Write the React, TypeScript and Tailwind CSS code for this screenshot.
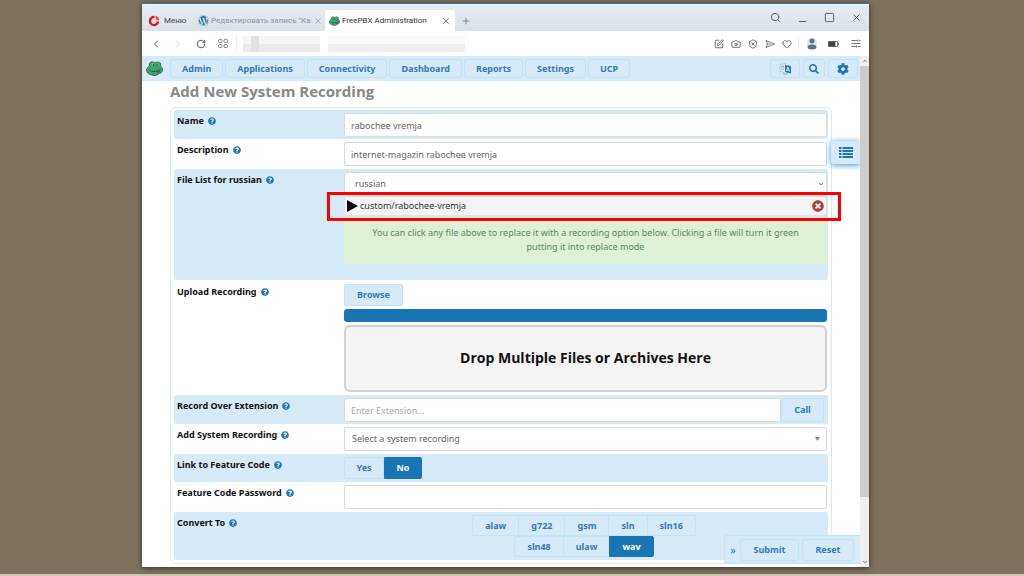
import React, { useState } from "react";
import { FaCog, FaQuestionCircle, FaSearch, FaTimesCircle, FaWordpress } from "react-icons/fa";
import {
  Camera,
  ChevronDown,
  ChevronLeft,
  ChevronRight,
  ChevronUp,
  Heart,
  Minus,
  Plus,
  RotateCw,
  Search,
  ShieldX,
  Square,
  SquarePen,
  X,
} from "lucide-react";

const navItems = ["Admin", "Applications", "Connectivity", "Dashboard", "Reports", "Settings", "UCP"];
const formats = [
  ["alaw", "g722", "gsm", "sln", "sln16"],
  ["sln48", "ulaw", "wav"],
];

const buttonBase =
  "border border-[#c3e3f6] bg-[#d7eaf8] font-bold text-[#337ab7] flex items-center justify-center";
const fieldBase =
  "block h-6 w-full min-w-0 rounded-[2px] border border-[#d9dcde] bg-white text-[#666] outline-none";

function Frog({ className }: { className: string }) {
  return (
    <svg viewBox="0 0 34 30" className={className} aria-hidden="true">
      <path
        d="M7 10C5 4 9 1 14 2c2 0 3 1 4 2 2-2 6-3 9-1 3 1 3 5 2 7 3 2 4 5 4 8 0 5-5 7-8 8-3 3-9 4-13 2C6 27 1 24 1 18c0-4 3-6 6-8Z"
        fill="#3fa66b"
        stroke="#205b50"
        strokeWidth="1.5"
      />
      <ellipse cx="14" cy="7" rx="2.6" ry="3.2" fill="#71c795" />
      <ellipse cx="23" cy="7" rx="2.6" ry="3.2" fill="#71c795" />
      <ellipse cx="15" cy="8" rx="1.2" ry="2" fill="#17363c" />
      <ellipse cx="22" cy="8" rx="1.2" ry="2" fill="#17363c" />
      <path d="M5 17c5 5 16 6 25-1" fill="none" stroke="#1c4c48" strokeWidth="1.6" />
      <path d="M22 20c1 5 5 5 5-1Z" fill="#c84a5b" stroke="#1c4c48" />
    </svg>
  );
}

function OperaMark() {
  return (
    <svg viewBox="0 0 24 24" className="size-3" aria-hidden="true">
      <path d="M13 1.500A10.500 10.500 0 1 0 22.500 13H17.500a5.500 6 0 1 1-4.500-7Z" fill="#e0161f" />
      <path d="M15 1.500a10 10 0 0 1 7.500 8.500l-5 .8A6 6 0 0 0 15 7Z" fill="#f0444c" />
    </svg>
  );
}

function TranslateMark() {
  return (
    <svg viewBox="0 0 26 24" className="h-3 w-[13px]" aria-hidden="true">
      <path d="M2 3 13 1v18L2 17Z" fill="#e9f3fa" stroke="#7dadcf" />
      <path d="M4 7h7M7.500 5v2m2.500 0c-1 4-3 6-6 7m1-5c1 3 3 4 5 5" fill="none" stroke="#64819b" />
      <path d="m12 4 12 2v15l-12-3Z" fill="#1f76b4" />
      <path d="m15 16 3-8 3 9m-5-3 4 .5" fill="none" stroke="#fff" strokeWidth="1.6" />
      <path d="M8 21c3 2 7 2 9 0" fill="none" stroke="#5e8dad" strokeWidth="1.5" />
    </svg>
  );
}

function ListMark() {
  return (
    <svg viewBox="0 0 28 22" className="h-[11px] w-3.5" aria-hidden="true" fill="#1f76b4">
      <path d="M0 0h5v4H0zM7 0h21v4H7zM0 6h5v4H0zM7 6h21v4H7zM0 12h5v4H0zM7 12h21v4H7zM0 18h5v4H0zM7 18h21v4H7z" />
    </svg>
  );
}

function Row({
  label,
  htmlFor,
  tinted,
  className = "",
  children,
}: {
  label: string;
  htmlFor?: string;
  tinted?: boolean;
  className?: string;
  children: React.ReactNode;
}) {
  return (
    <div
      className={`grid grid-cols-[167px_minmax(0,1fr)] rounded-[2px] pr-px pl-[3px] ${
        tinted ? "bg-[#d7eaf8]" : "bg-white"
      } ${className}`}
    >
      <div className="flex h-[15px] items-center gap-1 font-bold text-[#111]">
        <label htmlFor={htmlFor}>{label}</label>
        <FaQuestionCircle className="size-2 text-[#1f76b4]" />
      </div>
      <div className="min-w-0">{children}</div>
    </div>
  );
}

function BrowserChrome() {
  return (
    <header className="font-[Roboto,'Noto_Sans',sans-serif] text-[8px]">
      <div className="flex h-7 items-end border-t border-[#3f77a3] bg-linear-to-b from-[#e6eef5] to-[#dae1e9]">
        <button className="flex h-5 w-[52px] items-center gap-1 pl-1.5 text-[#444]">
          <OperaMark />
          Меню
        </button>
        <div className="flex h-[21px] w-[131px] items-center gap-0.5 pr-2 pl-1 text-[#8b949d]">
          <FaWordpress className="size-[11px] shrink-0 text-[#2878a8]" />
          <span className="flex-1 whitespace-nowrap">Редактировать запись "Ка</span>
          <button aria-label="Close tab">
            <X className="size-2.5" strokeWidth={1.5} />
          </button>
        </div>
        <div className="flex h-[21px] w-[130px] items-center gap-0.5 rounded-t-[2px] bg-white pr-1 pl-1 text-[#333]">
          <Frog className="h-2.5 w-[11px] shrink-0" />
          <span className="flex-1 whitespace-nowrap">FreePBX Administration</span>
          <button aria-label="Close tab">
            <X className="size-2.5" strokeWidth={1.5} />
          </button>
        </div>
        <button aria-label="New tab" className="flex h-[21px] items-center pl-1.5 text-[#666]">
          <Plus className="size-2.5" strokeWidth={1.75} />
        </button>
        <div className="ml-auto flex h-full items-center gap-4 pr-[7px] text-[#555]">
          <button aria-label="Search tabs">
            <Search className="size-[11px]" strokeWidth={2} />
          </button>
          <button aria-label="Minimize" className="pt-2">
            <Minus className="size-[11px]" strokeWidth={2} />
          </button>
          <button aria-label="Maximize">
            <Square className="size-[11px]" strokeWidth={2} />
          </button>
          <button aria-label="Close">
            <X className="size-[11px]" strokeWidth={2} />
          </button>
        </div>
      </div>
      <div className="flex h-[25px] items-center bg-white px-2 text-[#555]">
        <button aria-label="Back">
          <ChevronLeft className="size-3" strokeWidth={2} />
        </button>
        <button aria-label="Forward" className="ml-2.5 text-[#ccc]">
          <ChevronRight className="size-3" strokeWidth={2} />
        </button>
        <button aria-label="Reload" className="ml-3">
          <RotateCw className="size-2.5" strokeWidth={2.25} />
        </button>
        <button aria-label="Speed dial" className="ml-3">
          <svg viewBox="0 0 20 18" className="h-[9px] w-2.5" fill="none" stroke="#666" strokeWidth="1.6" aria-hidden="true">
            <rect x="1" y="1" width="7" height="6" rx="2" />
            <rect x="12" y="1" width="7" height="6" rx="2" />
            <rect x="1" y="11" width="7" height="6" rx="2" />
            <rect x="12" y="11" width="7" height="6" rx="2" />
          </svg>
        </button>
        <div className="ml-2 h-4 border-l border-[#eee]" />
        <div className="mt-px ml-1.5 flex h-4 flex-1 gap-2">
          <div className="h-full w-[77px] bg-linear-to-b from-[#f5f5f5] from-50% to-[#eaeaea] to-50%">
            <div className="ml-2 h-full w-2 bg-[#e2e2e2]" />
          </div>
          <div className="h-full w-[137px] bg-linear-to-b from-[#fafafa] from-50% to-[#eff0ef] to-50%" />
        </div>
        <div className="flex items-center gap-[7px]">
          <SquarePen className="size-2.5" strokeWidth={2} />
          <Camera className="size-2.5" strokeWidth={2} />
          <ShieldX className="size-2.5" strokeWidth={2} />
          <svg
            viewBox="0 0 20 20"
            className="size-2.5"
            fill="none"
            stroke="currentColor"
            strokeWidth="1.6"
            strokeLinejoin="round"
            aria-hidden="true"
          >
            <path d="m2 3 17 7-17 7 3-7ZM5 10h6" />
          </svg>
          <Heart className="size-2.5" strokeWidth={2} />
        </div>
        <div className="ml-1.5 h-4 border-l border-[#eee]" />
        <svg viewBox="0 0 24 26" className="ml-[7px] h-[13px] w-3" aria-hidden="true">
          <circle cx="12" cy="12" r="11" fill="#dfe8f1" />
          <circle cx="12" cy="8" r="5" fill="#60728a" />
          <ellipse cx="12" cy="20" rx="9" ry="5" fill="#60728a" />
        </svg>
        <svg viewBox="0 0 22 12" className="ml-2.5 h-1.5 w-[11px]" aria-hidden="true">
          <path d="M1 1h18v10H1zM19 4h2v4h-2" fill="none" stroke="#555" strokeWidth="1.5" />
          <path d="M1 1h14v10H1z" fill="#444" />
        </svg>
        <svg
          viewBox="0 0 20 18"
          className="ml-3 h-[9px] w-2.5"
          fill="none"
          stroke="currentColor"
          strokeWidth="1.6"
          aria-hidden="true"
        >
          <path d="M1 3h12m3 0h3M1 9h3m3 0h12M1 15h9m3 0h6M14 1v4M6 7v4M11 13v4" />
        </svg>
      </div>
    </header>
  );
}

export default function App() {
  const [linked, setLinked] = useState("No");
  const [selected, setSelected] = useState<string[]>(["wav"]);
  const toggle = (name: string) =>
    setSelected((list) => (list.includes(name) ? list.filter((n) => n !== name) : [...list, name]));

  return (
    <div className="flex min-h-screen flex-col border-b-2 border-[#cfc6ba] bg-[#7f735f] pt-[3px] pr-[155px] pb-[7px] pl-[142px] font-['Noto_Sans','Open_Sans',sans-serif] text-[9px] leading-[14px]">
      <div className="flex flex-1 flex-col bg-white shadow-[0_1px_6px_rgba(0,0,0,0.6)]">
        <BrowserChrome />
        <div className="flex flex-1">
          <div className="relative min-w-0 flex-1">
            <nav className="flex h-[25px] items-center gap-0.5 bg-[#d7eaf8] pr-0.5 pl-1">
              <Frog className="mr-[5px] h-[15px] w-[17px]" />
              {navItems.map((item) => (
                <a key={item} href="#" className={`${buttonBase} h-[19px] rounded-[3px] px-[11px]`}>
                  {item}
                </a>
              ))}
              <div className="ml-auto flex gap-[3px]">
                <button aria-label="Language" className={`${buttonBase} h-[19px] w-[30px] rounded-[3px]`}>
                  <TranslateMark />
                </button>
                <button aria-label="Search" className={`${buttonBase} h-[19px] w-[22px] rounded-[3px]`}>
                  <FaSearch className="size-2.5 text-[#1f76b4]" />
                </button>
                <button aria-label="Settings" className={`${buttonBase} h-[19px] w-[30px] rounded-[3px]`}>
                  <FaCog className="size-3 text-[#1f76b4]" />
                </button>
              </div>
            </nav>

            <main className="pr-7 pb-[3px] pl-7">
              <h1 className="h-[26px] font-['Open_Sans',sans-serif] text-[15px] leading-[20px] font-bold text-[#888]">
                Add New System Recording
              </h1>
              <form
                onSubmit={(e) => e.preventDefault()}
                className="rounded-[6px] border border-[#d7eaf8] px-[3px] pt-0.5 pb-[3px]"
              >
                <Row label="Name" htmlFor="name" tinted className="pt-[3px] pb-0.5">
                  <input id="name" defaultValue="rabochee vremja" className={`${fieldBase} px-1.5`} />
                </Row>
                <Row label="Description" htmlFor="description" className="pt-[3px] pb-[3px]">
                  <input
                    id="description"
                    defaultValue="internet-magazin rabochee vremja"
                    className={`${fieldBase} px-1.5`}
                  />
                </Row>
                <Row label="File List for russian" htmlFor="language" tinted className="pt-[3px] pb-4">
                  <div className="relative">
                    <select id="language" className={`${fieldBase} appearance-none px-2.5`}>
                      <option>russian</option>
                    </select>
                    <ChevronDown
                      className="pointer-events-none absolute top-2 right-0.5 size-2 text-[#666]"
                      strokeWidth={2.5}
                    />
                  </div>
                  <div className="relative flex h-5 items-center rounded-[2px] border border-[#dfe3e5] bg-[#f4f4f4] pr-0.5 pl-0.5 text-[#333]">
                    <button aria-label="Play" className="mr-0.5">
                      <svg viewBox="0 0 11 12" className="h-3 w-[11px]" aria-hidden="true">
                        <path d="M0 0 11 6 0 12Z" fill="#080808" />
                      </svg>
                    </button>
                    <span className="flex-1">custom/rabochee-vremja</span>
                    <button aria-label="Remove file">
                      <FaTimesCircle className="size-3 text-[#a94442]" />
                    </button>
                    <div className="pointer-events-none absolute -top-[5px] -right-[15px] -bottom-[6px] -left-[18px] border-[3px] border-[#fb0000]" />
                  </div>
                  <p className="mt-px rounded-[2px] bg-[#dff0d8] px-5 pt-[9px] pb-[10px] text-center text-[#5c8a5d]">
                    You can click any file above to replace it with a recording option below. Clicking a file will turn
                    it green <br />
                    putting it into replace mode
                  </p>
                </Row>
                <Row label="Upload Recording" htmlFor="browse" className="pt-1 pb-[3px]">
                  <button id="browse" type="button" className={`${buttonBase} h-[22px] w-[59px] rounded-[2px]`}>
                    Browse
                  </button>
                  <div className="mt-[3px] h-[13px] rounded-[3px] bg-[#1a75b5]" />
                  <div className="mt-[3px] flex h-[67px] items-center justify-center rounded-[6px] border-2 border-[#d0d0d0] bg-[#f4f4f4] pb-0.5 font-['Open_Sans',sans-serif] text-[14px] font-bold text-[#111]">
                    Drop Multiple Files or Archives Here
                  </div>
                </Row>
                <Row label="Record Over Extension" htmlFor="extension" tinted className="pt-[3px] pb-0.5">
                  <div className="flex pr-[3px]">
                    <input
                      id="extension"
                      placeholder="Enter Extension..."
                      className={`${fieldBase} flex-1 px-1.5 placeholder:text-[#aaa]`}
                    />
                    <button type="button" className={`${buttonBase} w-[43px] rounded-r-[2px]`}>
                      Call
                    </button>
                  </div>
                </Row>
                <Row label="Add System Recording" htmlFor="system-recording" className="pt-[3px] pb-[3px]">
                  <div className="relative">
                    <select id="system-recording" className={`${fieldBase} appearance-none px-[7px]`}>
                      <option>Select a system recording</option>
                    </select>
                    <svg
                      viewBox="0 0 5 4"
                      className="pointer-events-none absolute top-2.5 right-[7px] h-1 w-[5px]"
                      aria-hidden="true"
                    >
                      <path d="M0 0h5L2.500 4Z" fill="#888" />
                    </svg>
                  </div>
                </Row>
                <Row label="Link to Feature Code" tinted className="pt-[3px] pb-[3px]">
                  <div className="flex">
                    {["Yes", "No"].map((option) => (
                      <label
                        key={option}
                        className={`relative flex h-[22px] items-center justify-center border font-bold first:w-10 first:rounded-l-[2px] last:w-[38px] last:rounded-r-[2px] ${
                          linked === option
                            ? "border-[#1a75b5] bg-[#1a75b5] text-white"
                            : "border-[#c3e3f6] bg-[#d7eaf8] text-[#337ab7]"
                        }`}
                      >
                        <input
                          type="radio"
                          name="linked"
                          className="sr-only"
                          checked={linked === option}
                          onChange={() => setLinked(option)}
                        />
                        {option}
                      </label>
                    ))}
                  </div>
                </Row>
                <Row label="Feature Code Password" htmlFor="password" className="pt-[3px] pb-[3px]">
                  <input id="password" className={`${fieldBase} px-1.5`} />
                </Row>
                <Row label="Convert To" tinted className="pt-[3px] pb-[3px]">
                  {formats.map((line) => (
                    <div key={line[0]} className="flex justify-center pr-1">
                      {line.map((name) => (
                        <label
                          key={name}
                          className={`relative -mr-px flex h-[21px] items-center border px-3 font-bold first:rounded-l-[2px] last:rounded-r-[2px] ${
                            selected.includes(name)
                              ? "border-[#1a75b5] bg-[#1a75b5] text-white"
                              : "border-[#c3e3f6] bg-[#d7eaf8] text-[#337ab7]"
                          }`}
                        >
                          <input
                            type="checkbox"
                            className="sr-only"
                            checked={selected.includes(name)}
                            onChange={() => toggle(name)}
                          />
                          {name}
                        </label>
                      ))}
                    </div>
                  ))}
                </Row>
              </form>
            </main>

            <button
              aria-label="Show list"
              className="absolute top-[85px] right-0 flex h-[23px] w-[29px] items-center justify-center rounded-l-[3px] bg-[#d7eaf8] shadow-[0_1px_6px_#3f92c8] [clip-path:inset(-6px_0_-6px_-6px)]"
            >
              <ListMark />
            </button>
            <div className="absolute right-0 bottom-[3px] flex h-[29px] items-center gap-[3px] rounded-l-[3px] border border-r-0 border-[#c3e3f6] bg-[#d7eaf8] pr-1.5">
              <button aria-label="Collapse actions" className="w-3 pl-1 text-[11px] text-[#337ab7]">
                »
              </button>
              <button type="submit" className={`${buttonBase} h-[22px] w-[59px] rounded-[3px]`}>
                Submit
              </button>
              <button type="reset" className={`${buttonBase} h-[22px] w-[52px] rounded-[3px]`}>
                Reset
              </button>
            </div>
          </div>

          <div className="flex w-[9px] flex-col items-center bg-[#f0f0f0] text-[#666]" aria-hidden="true">
            <div className="flex h-2.5 items-center">
              <ChevronUp className="size-1.5" strokeWidth={3} />
            </div>
            <div className="w-full flex-[432] bg-[#cdcdcd]" />
            <div className="flex-[60]" />
            <div className="flex h-2.5 items-center">
              <ChevronDown className="size-1.5" strokeWidth={4} />
            </div>
          </div>
        </div>
      </div>
    </div>
  );
}
